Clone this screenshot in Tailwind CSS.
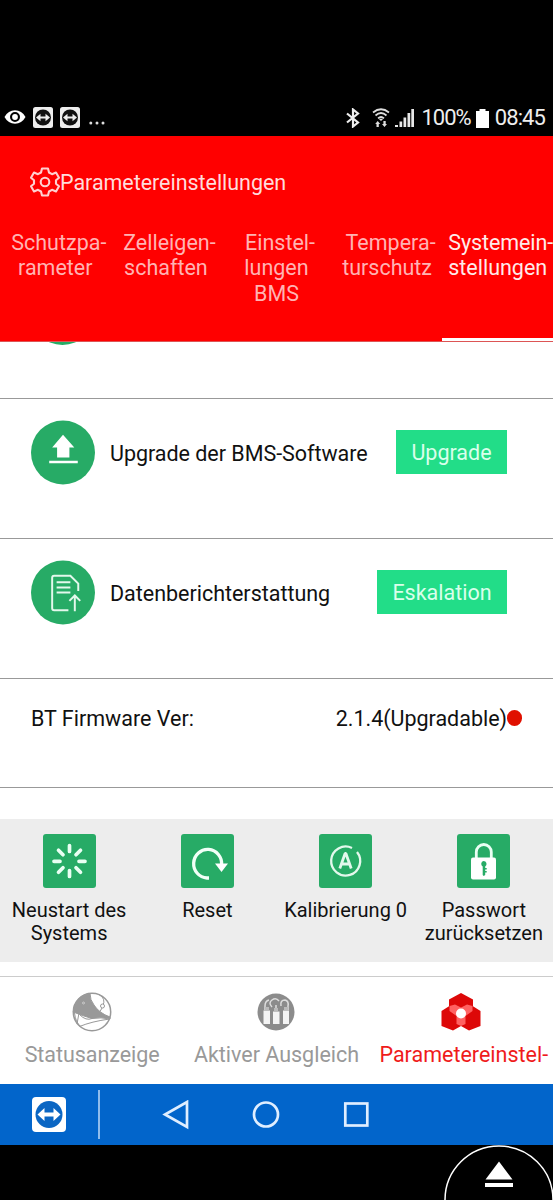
<!DOCTYPE html>
<html lang="de">
<head>
<meta charset="utf-8">
<meta name="viewport" content="width=device-width">
<title>Parametereinstellungen</title>
<script src="https://cdn.jsdelivr.net/npm/@tailwindcss/browser@4"></script>
</head>
<body class="bg-black">
<div class="relative flex h-[1200px] w-[553px] flex-col overflow-hidden bg-black font-['Roboto',sans-serif] text-[21.5px] leading-[25.3px] whitespace-nowrap text-[#111]">
  <!-- Status bar -->
  <header class="flex h-[136px] shrink-0 items-end justify-between pr-[8px] pb-[6px] pl-[4px] text-[#eee]">
    <div class="flex h-[26px] items-center gap-[7px]">
      <svg class="h-[16px] w-[22px]" viewBox="0 0 22 16"><path fill="#fff" fill-rule="evenodd" d="M.5 8C3 3.5 6.500 1.200 11 1.200S19 3.500 21.500 8C19 12.500 15.500 14.800 11 14.800S3 12.500.5 8ZM11 3a5 5 0 1 0 0 10a5 5 0 0 0 0-10Z"/><circle cx="11" cy="8" r="2.900" fill="#fff"/></svg>
      <svg class="h-[21px] w-[20px]" viewBox="0 0 20 21"><rect width="20" height="21" rx="2.500" fill="#eee"/><circle cx="10" cy="10.500" r="8" fill="#111"/><path fill="#eee" d="M3 10.500 7.500 6.700v2.700h5V6.700L17 10.500l-4.500 3.800v-2.700h-5v2.700Z"/></svg>
      <svg class="h-[21px] w-[20px]" viewBox="0 0 20 21"><rect width="20" height="21" rx="2.500" fill="#eee"/><circle cx="10" cy="10.500" r="8" fill="#111"/><path fill="#eee" d="M3 10.500 7.500 6.700v2.700h5V6.700L17 10.500l-4.500 3.800v-2.700h-5v2.700Z"/></svg>
      <svg class="h-[21px] w-[18px]" viewBox="0 0 18 21" fill="#ddd"><circle cx="3.800" cy="16" r="1.500"/><circle cx="10" cy="16" r="1.500"/><circle cx="16" cy="16" r="1.500"/></svg>
    </div>
    <div class="flex h-[24px] items-center text-[22px]">
      <svg class="mr-[12px] h-[20px] w-[14px]" viewBox="0 0 14 20" fill="none" stroke="#eee" stroke-width="2.200"><path d="m1 5.500 11 9-5 4V1.500l5 4-11 9"/></svg>
      <svg class="mr-[5px] h-[20px] w-[18px]" viewBox="0 0 18 20" fill="none" stroke="#ddd" stroke-width="1.700"><path d="M1 4.500Q9-2 17 4.500M3.500 7.500Q9 2.500 14.500 7.500M6 10.300Q9 7.700 12 10.300"/><path fill="#ddd" stroke="none" d="m9 13-2.300-2.300h4.600ZM5.700 13l2.500 3H6.800v3H4.500v-3H3.200ZM12.500 19 10 16h1.400v-3h2.300v3H15Z"/></svg>
      <svg class="mr-[6px] h-[20px] w-[20px]" viewBox="0 0 20 20" fill="#e8e8e8"><path d="M0 17h3v2H0ZM4.500 13.500h2.700V19H4.500ZM8.500 9.500h2.700V19H8.500ZM12.500 5h2.700v14h-2.700ZM16.300 1H19v18h-2.700Z"/></svg>
      <span class="tracking-[-1px]">100%</span>
      <svg class="mr-[6px] ml-[5px] h-[19px] w-[13px]" viewBox="0 0 13 19"><path fill="#fff" d="M3.500 0h6v2H13v17H0V2h3.500Z"/></svg>
      <span class="tracking-[-0.9px]">08:45</span>
    </div>
  </header>

  <!-- App bar with tabs -->
  <section class="flex h-[206px] shrink-0 flex-col border-b border-[#d55] bg-[#ff0000] text-[#ffb3b3]">
    <div class="flex h-[92px] items-center pl-[30px] text-[#ffdcdc]">
      <svg class="h-[30px] w-[30px]" viewBox="0 0 30 30" fill="none" stroke="#ffcfcf" stroke-width="2.100" stroke-linejoin="round"><path d="M12 1.500h6l1 4 3 1.700 4-1.700 3 5.200L26 13.300v3.400l3 2.600-3 5.200-4-1.700-3 1.700-1 4h-6l-1-4-3-1.700-4 1.700-3-5.200 3-2.600v-3.400l-3-2.600 3-5.200 4 1.700 3-1.700Z"/><circle cx="15" cy="15" r="4.300"/></svg>
      <h1 class="pt-[1px] tracking-[-0.04px]">Parametereinstellungen</h1>
    </div>
    <nav class="grid flex-1 grid-cols-5 text-center [&>div]:pt-[2px]">
      <div>Schutzpa<span class="-mr-[7px]">-</span><br>rameter</div>
      <div>Zelleigen<span class="-mr-[7px]">-</span><br>schaften</div>
      <div>Einstel<span class="-mr-[7px]">-</span><br>lungen<br>BMS</div>
      <div>Tempera<span class="-mr-[7px]">-</span><br>turschutz</div>
      <div class="border-b-[3px] border-white text-[#ffebeb]"><span class="tracking-[-0.1px]">Systemein<span class="-mr-[6px]">-</span></span><br>stellungen</div>
    </nav>
  </section>

  <!-- Settings list -->
  <main class="flex h-[477px] shrink-0 flex-col bg-white">
    <div class="h-[57px] shrink-0 overflow-hidden border-b-[1.500px] border-[#999] pl-[30px]">
      <div class="-mt-[62px] h-[65px] w-[65px] rounded-full bg-[#27ab66]"></div>
    </div>
    <div class="flex h-[140px] shrink-0 items-start border-b border-[#999] pr-[46px] pl-[31px]">
      <svg class="mt-[21px] h-[65px] w-[64px]" viewBox="0 0 65 65"><circle cx="32.500" cy="32.500" r="32.500" fill="#27ab66"/><path fill="#fff" d="m32.500 14.500 11.500 13H39v10H26.500v-10H21.500ZM18.500 41h29v2.500h-29Z"/></svg>
      <span class="mt-[42px] ml-[15px] flex-1 tracking-[-0.03px]">Upgrade der BMS-Software</span>
      <button class="mt-[31px] h-[44px] w-[111px] bg-[#22dd88] pt-[2px] text-[#d9ffeb]">Upgrade</button>
    </div>
    <div class="flex h-[140px] shrink-0 items-start border-b border-[#999] pr-[46px] pl-[31px]">
      <svg class="mt-[21px] h-[65px] w-[64px]" viewBox="0 0 65 65" fill="none" stroke="#e3f8ec" stroke-width="2"><circle cx="32.500" cy="32.500" r="32.500" fill="#27ab66" stroke="none"/><path d="M38 50.500H23.500q-2 0-2-2V17.500q0-2 2-2h16.500l8 8V31M26 22h14M26 27.500h14M26 32.500h14M44.500 51.500V36M39 41l5.500-5.500L50 41"/></svg>
      <span class="mt-[42px] ml-[15px] flex-1 tracking-[-0.02px]">Datenberichterstattung</span>
      <button class="mt-[31px] h-[44px] w-[130px] bg-[#22dd88] pt-[2px] text-[#d9ffeb]">Eskalation</button>
    </div>
    <div class="flex h-[109px] shrink-0 items-start border-b-[1.500px] border-[#999] pt-[27px] pr-[31px] pl-[31px]">
      <span class="flex-1">BT Firmware Ver:</span>
      <span class="tracking-[-0.02px]">2.1.4(Upgradable)</span>
      <span class="mt-[4px] h-[16px] w-[15px] rounded-full bg-[#e01000]"></span>
    </div>
  </main>

  <!-- Quick actions -->
  <section class="grid h-[143px] shrink-0 grid-cols-4 bg-[#ededed] pt-[15px] text-center text-[20px] leading-[23.5px] [&_svg]:mx-auto [&_svg]:mb-[10px] [&_svg]:h-[54px] [&_svg]:w-[53px]">
    <div>
      <svg viewBox="0 0 53 54"><rect width="53" height="54" rx="3" fill="#27ab66"/><path stroke="#e9fff3" stroke-width="3.700" stroke-linecap="round" d="M26.500 11.500v6M26.500 36.500v6M11 27.300h6M36 27.300h6M15.500 16.300l4.500 4.500M33 33.800l4.500 4.500M37.500 16.300 33 20.800M20 33.800l-4.500 4.500"/></svg>
      <span class="relative top-[1px]">Neustart des</span><br>Systems
    </div>
    <div>
      <svg viewBox="0 0 53 54" fill="none"><rect width="53" height="54" rx="3" fill="#27ab66"/><path stroke="#f1fff7" stroke-width="3.300" d="M28 44H26a14 14.300 0 1 1 14.600-13"/><path fill="#fff" d="M34 29.500h13L40.500 38Z"/></svg>
      <span class="relative top-[1px]">Reset</span>
    </div>
    <div>
      <svg viewBox="0 0 53 54" fill="none" stroke="#e3f8ec"><rect width="53" height="54" rx="3" fill="#27ab66" stroke="none"/><path stroke-width="2.300" d="M33 14A14.500 14.500 0 1 0 38 18"/><path stroke-width="2.800" stroke-linejoin="bevel" d="M20.800 34.500 26.100 19.500h.8l5.300 15M22.800 30h7.400"/></svg>
      <span class="relative top-[1px]">Kalibrierung 0</span>
    </div>
    <div>
      <svg viewBox="0 0 53 54"><rect width="53" height="54" rx="3" fill="#27ab66"/><path fill="none" stroke="#e9fff3" stroke-width="2.800" d="M19.300 25v-7a7.500 7.500 0 0 1 15 0v7"/><rect x="14" y="23.500" width="25" height="22" rx="2" fill="#fff"/><path fill="#27ab66" d="M26.500 27a3 3 0 0 1 1.700 5.500v1.500h1.500v1.500h-1.500v1.500h1.500v1.500h-1.500V41l-1.500 1-1-1v-8.500A3 3 0 0 1 26.500 27Z"/></svg>
      <span class="relative top-[1px]">Passwort</span><br>zurücksetzen
    </div>
  </section>

  <!-- Bottom navigation -->
  <nav class="h-[122px] shrink-0 bg-white pt-[14px] text-[#999]">
    <div class="grid h-[108px] grid-cols-3 border-t border-[#ccc] pt-[14px] text-center [&_svg]:mx-auto [&_svg]:mb-[9px] [&_svg]:h-[42px] [&_svg]:w-[42px]">
      <div>
        <svg viewBox="0 0 42 42" fill="none" stroke="#999"><circle cx="21" cy="21" r="18.700" stroke-width="1.500"/><path fill="#999" d="M2.300 21A18.700 18.700 0 0 1 19 2.500Q19 9 23 14 28 22 39 26L39 28Q30 26 21 27.500 12 25 2.300 21Z"/><path d="M28 3.500q7 4 4 11M31 17l-4 7M3.500 22q1 9 6 13.500M8 22l-2 11M8.500 35.500q12-5 30-7.500M9 24q6 6 12 3.500"/><circle cx="31.500" cy="15" r="2" fill="#fff"/><circle cx="12.500" cy="12" r="1" stroke="#ccc"/></svg>
        <span class="tracking-[-0.05px]">Statusanzeige</span>
      </div>
      <div>
        <svg viewBox="0 0 42 42" fill="none"><circle cx="21" cy="21" r="18.500" fill="#8c8c8c"/><path stroke="#ddd" stroke-width="1.500" d="M10 19v-4q0-5 4-6M17 16q-4-4 0-7 4-3 7 1M21 19v-5M26 15q-1-6 4-6 4 1 3 6v4"/><path fill="#f4f4f4" d="M8.500 19.500h6.500V33H8.500ZM18 20.500h6.500V33H18ZM28 19.500h6V33h-6Z"/><path fill="#bbb" d="M10 16h4v3.500h-4ZM19 17h4v3.500h-4ZM29 16h4v3.500h-4Z"/></svg>
        <span class="tracking-[-0.01px]">Aktiver Ausgleich</span>
      </div>
      <div class="text-[#ef1b1b]">
        <svg viewBox="0 0 42 42"><path fill="#dd0808" d="m21 2 12 6.500v6.700l7.500 4.800v15L29 39.500l-8-4.500-8 4.500L1.500 35V20L9 15.200V8.500Z"/><path fill="#ff6262" d="m9.500 15 5.500-1.500 6 3 6-3 5.500 1.500V20l-7 5v8L21 35l-4.500-2v-8l-7-5Z"/><circle cx="21" cy="22.500" r="5" fill="#fff"/></svg>
        <span>Parametereinstel<span class="-mr-[6px]">-</span></span>
      </div>
    </div>
  </nav>

  <!-- System navigation -->
  <footer class="flex h-[61px] shrink-0 items-center bg-[#0265cb] pl-[32px]">
    <svg class="h-[35px] w-[34px]" viewBox="0 0 34 35"><rect width="34" height="35" rx="4" fill="#fff"/><circle cx="17" cy="17.500" r="13.500" fill="#0b66c3"/><path fill="#fff" d="m5.500 17.500 7-6.500v4.500h9V11l7 6.500-7 6.500v-4.500h-9V24Z"/></svg>
    <div class="ml-[32px] h-[49px] w-[2px] bg-[#8fbcec]"></div>
    <svg class="ml-[62px] h-[30px] w-[27px]" viewBox="0 0 27 30" fill="none" stroke="#e0eeff" stroke-width="2.700"><path d="M25 2v25L3 14.500Z"/></svg>
    <svg class="ml-[63px] h-[30px] w-[28px]" viewBox="0 0 28 30" fill="none" stroke="#e0eeff" stroke-width="2.700"><circle cx="14" cy="14.500" r="12"/></svg>
    <svg class="ml-[62px] h-[30px] w-[28px]" viewBox="0 0 28 30" fill="none" stroke="#e0eeff" stroke-width="2.700"><rect x="3.300" y="3.500" width="22" height="22"/></svg>
  </footer>
  <div class="flex flex-1 justify-end">
    <svg class="h-[55px] w-[110px]" viewBox="0 0 110 55"><circle cx="56" cy="55" r="54" fill="#000" stroke="#fff" stroke-width="1.500"/><path fill="#fff" d="m56 16.500 13.500 18h-27ZM42 38h28v4H42Z"/></svg>
  </div>
</div>
</body>
</html>
